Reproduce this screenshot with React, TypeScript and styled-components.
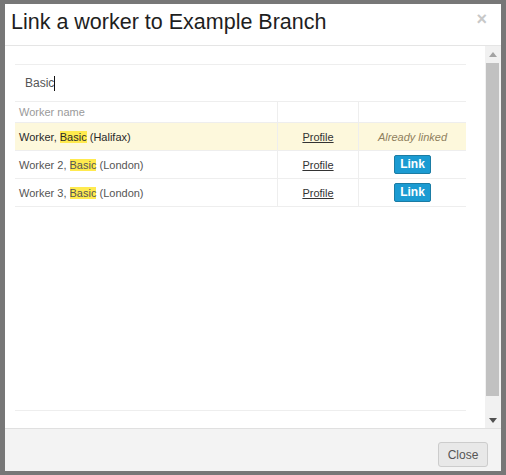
import React from "react";
import styled, { createGlobalStyle } from "styled-components";

const Global = createGlobalStyle`
  html, body { margin: 0; padding: 0; }
  body {
    background: #777777;
    font-family: "Liberation Sans", Arial, sans-serif;
  }
  * { box-sizing: border-box; }
`;

const Frame = styled.div`
  width: 506px;
  height: 475px;
  padding: 4px 5px 4px 5px;
`;

const Dialog = styled.div`
  width: 496px;
  height: 467px;
  background: #ffffff;
  display: flex;
  flex-direction: column;
  overflow: hidden;
`;

const Header = styled.div`
  height: 42px;
  flex: none;
  border-bottom: 1px solid #e5e5e5;
  display: flex;
  justify-content: space-between;
  align-items: flex-start;
  padding: 0 14px 0 6px;
`;

const Title = styled.h4`
  margin: 0;
  font-family: "Liberation Sans", Arial, sans-serif;
  font-size: 21.5px;
  font-weight: normal;
  line-height: 37px;
  color: #1e1e1e;
`;

const CloseX = styled.span`
  margin-top: 5px;
  font-size: 18px;
  font-weight: bold;
  line-height: 20px;
  color: #c8c8c8;
`;

const Body = styled.div`
  flex: 1;
  display: flex;
  min-height: 0;
`;

const Content = styled.div`
  flex: 1;
  display: flex;
  flex-direction: column;
  padding: 18px 19px 17px 10px;
`;

const SearchBox = styled.div`
  height: 38px;
  border-top: 1px solid #eeeeee;
  border-bottom: 1px solid #eeeeee;
  display: flex;
  align-items: center;
  padding: 0 10px;
  font-size: 12px;
  color: #555555;
`;

const Caret = styled.span`
  display: inline-block;
  width: 1px;
  height: 15px;
  background: #111111;
  vertical-align: middle;
`;

const Results = styled.div`
  flex: 1;
  border-bottom: 1px solid #eeeeee;
`;

const Row = styled.div<{ $head?: boolean; $linked?: boolean }>`
  display: grid;
  grid-template-columns: 262px 81px 1fr;
  height: ${(p) => (p.$head ? 21 : 28)}px;
  border-bottom: 1px solid #eeeeee;
  background: ${(p) => (p.$linked ? "#fdf8dc" : "#ffffff")};
  font-size: 11px;
  color: ${(p) => (p.$head ? "#9a9a9a" : p.$linked ? "#2a2a2a" : "#555555")};
`;

const Cell = styled.div<{ $center?: boolean; $divider?: boolean }>`
  display: flex;
  align-items: center;
  justify-content: ${(p) => (p.$center ? "center" : "flex-start")};
  padding: 0 4px;
  border-left: ${(p) => (p.$divider ? "1px solid #eeeeee" : "none")};
  white-space: nowrap;
`;

const Name = styled.span`
  white-space: pre;
`;

const Mark = styled.mark`
  background: #ffea4f;
  color: inherit;
  padding: 0;
`;

const ProfileLink = styled.a`
  color: #333333;
  text-decoration: underline;
  font-size: 11px;
  cursor: pointer;
`;

const Linked = styled.span`
  font-style: italic;
  color: #8f7f5c;
  font-size: 11px;
`;

const LinkButton = styled.button`
  width: 37px;
  height: 19px;
  padding: 0;
  border: 1px solid #1b7ca4;
  border-radius: 2px;
  background: #1b9bd2;
  color: #ffffff;
  font-family: "Liberation Sans", Arial, sans-serif;
  font-size: 12px;
  font-weight: bold;
  line-height: 17px;
  cursor: pointer;
`;

const Scrollbar = styled.div`
  width: 16px;
  flex: none;
  background: #f1f1f1;
  display: flex;
  flex-direction: column;
`;

const ArrowBtn = styled.div`
  height: 16px;
  flex: none;
  display: flex;
  align-items: center;
  justify-content: center;
`;

const Thumb = styled.div`
  height: 333px;
  margin: 1px 2px 0 1px;
  background: #c1c1c1;
  flex: none;
`;

const TrackRest = styled.div`
  flex: 1;
`;

const Footer = styled.div`
  height: 43px;
  flex: none;
  border-top: 1px solid #e0e0e0;
  background: #f3f3f3;
  display: flex;
  justify-content: flex-end;
  align-items: flex-start;
  padding: 13px 13px 0 0;
`;

const CloseButton = styled.button`
  width: 50px;
  height: 25px;
  border: 1px solid #cccccc;
  border-radius: 3px;
  background: #e8e8e8;
  color: #555555;
  font-family: "Liberation Sans", Arial, sans-serif;
  font-size: 12px;
  padding: 0;
  cursor: pointer;
`;

type Worker = { pre: string; loc: string; linked: boolean };

const workers: Worker[] = [
  { pre: "Worker, ", loc: "Halifax", linked: true },
  { pre: "Worker 2, ", loc: "London", linked: false },
  { pre: "Worker 3, ", loc: "London", linked: false },
];

const Tri = ({ up, color }: { up: boolean; color: string }) => (
  <svg width="8" height="5" viewBox="0 0 8 5">
    <polygon points={up ? "0,5 8,5 4,0" : "0,0 8,0 4,5"} fill={color} />
  </svg>
);

export default function App() {
  return (
    <>
      <Global />
      <Frame>
        <Dialog>
          <Header>
            <Title>Link a worker to Example Branch</Title>
            <CloseX>×</CloseX>
          </Header>
          <Body>
            <Content>
              <SearchBox>
                Basic<Caret />
              </SearchBox>
              <Results>
                <Row $head>
                  <Cell>Worker name</Cell>
                  <Cell $divider />
                  <Cell $divider />
                </Row>
                {workers.map((w, i) => (
                  <Row key={i} $linked={w.linked}>
                    <Cell>
                      <Name>
                        {w.pre}
                        <Mark>Basic</Mark>
                        {` (${w.loc})`}
                      </Name>
                    </Cell>
                    <Cell $divider $center>
                      <ProfileLink>Profile</ProfileLink>
                    </Cell>
                    <Cell $divider $center>
                      {w.linked ? <Linked>Already linked</Linked> : <LinkButton>Link</LinkButton>}
                    </Cell>
                  </Row>
                ))}
              </Results>
            </Content>
            <Scrollbar>
              <ArrowBtn>
                <Tri up color="#a3a3a3" />
              </ArrowBtn>
              <Thumb />
              <TrackRest />
              <ArrowBtn>
                <Tri up={false} color="#505050" />
              </ArrowBtn>
            </Scrollbar>
          </Body>
          <Footer>
            <CloseButton>Close</CloseButton>
          </Footer>
        </Dialog>
      </Frame>
    </>
  );
}
